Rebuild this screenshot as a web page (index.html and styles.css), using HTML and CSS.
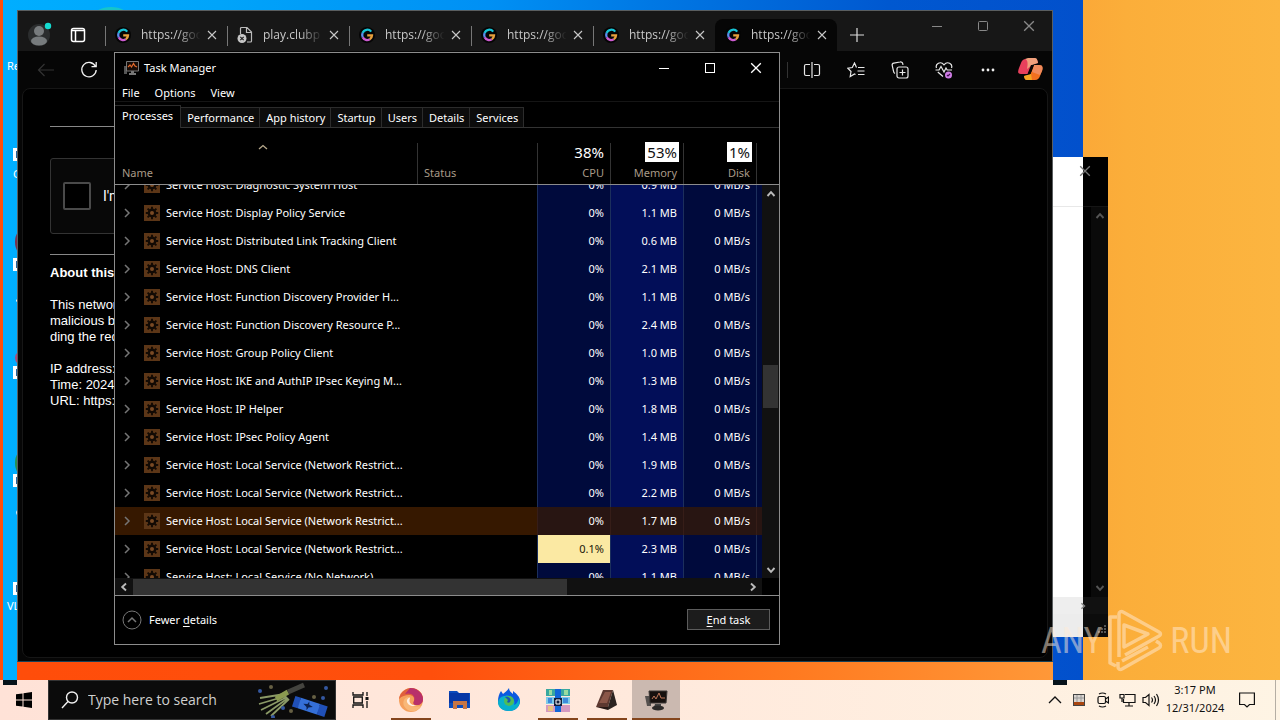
FILE: index.html
```html
<!DOCTYPE html>
<html lang="en">
<head>
<meta charset="utf-8">
<title>Task Manager</title>
<link rel="stylesheet" href="styles.css">
</head>
<body>
<svg class="sprite" aria-hidden="true">
  <defs>
    <symbol id="gear" viewBox="0 0 16 16">
      <path fill="#5c3617" d="M0 0h16v16H0z"/>
      <circle cx="8" cy="8" r="4.4" fill="#120a04"/>
      <path d="M8 1.8v12.4M1.8 8h12.4M3.6 3.6l8.8 8.8M12.4 3.6l-8.8 8.8" stroke="#120a04" stroke-width="1.9"/>
      <circle cx="8" cy="8" r="2" fill="#7a4a24"/>
    </symbol>
    <symbol id="chev" viewBox="0 0 8 10"><path d="M2 1l4 4-4 4" fill="none" stroke="#757575" stroke-width="1.5"/></symbol>
    <symbol id="glogo" viewBox="0 0 16 16">
      <circle cx="8" cy="8" r="8" fill="#050505"/>
      <path d="M12.2 4.6A5 5 0 0 0 3.6 6" fill="none" stroke="#18c4d6" stroke-width="2.3"/>
      <path d="M3.6 6a5 5 0 0 0 .2 4.4" fill="none" stroke="#5c8df0" stroke-width="2.3"/>
      <path d="M3.8 10.4a5 5 0 0 0 7 1.9" fill="none" stroke="#cc5bd0" stroke-width="2.3"/>
      <path d="M10.8 12.3A5 5 0 0 0 13 8.4H8.2" fill="none" stroke="#e8a03c" stroke-width="2.3"/>
    </symbol>
    <symbol id="x" viewBox="0 0 10 10"><path d="M1 1l8 8M9 1L1 9" fill="none" stroke="currentColor" stroke-width="1.1"/></symbol>
    <symbol id="arr" viewBox="0 0 10 10"><path d="M1.5 7L5 3.2 8.5 7" fill="none" stroke="currentColor" stroke-width="1.9"/></symbol>
    <symbol id="tm" viewBox="0 0 16 16">
      <path d="M1 6v8h3V6z" fill="#555"/><path d="M3.5 1.5h12v9.500h-12z" fill="#160b06" stroke="#777"/>
      <path d="M5 7l2-2 1.500 2L10.500 3.500 12 6l2 1" fill="none" stroke="#e0672a" stroke-width="1.200"/>
      <path d="M8 11h3v2h2v2H6v-2h2z" fill="#777"/>
    </symbol>
  </defs>
</svg>

<main class="desktop">
  <div class="wallpaper">
    <div class="glow"></div>
    <span class="shortcut s1">Recycle</span>
    <span class="shortcut s2">Google</span>
    <span class="shortcut s3">VLC</span>
    <i class="chip c1"></i><i class="chip c2"></i><i class="chip c3"></i><i class="chip c4"></i><i class="chip c5"></i>
    <i class="dot d1"></i><i class="dot d2"></i><i class="dot d3"></i><i class="dot d4"></i><i class="dot d5"></i>
  </div>

  <section class="backwin" aria-label="Background window">
    <header class="back-title"><button class="plain" aria-label="Close window"><svg width="12" height="12"><use href="#x"/></svg></button></header>
    <div class="back-body">
      <svg width="10" height="10"><use href="#arr"/></svg>
      <svg class="down" width="10" height="10"><use href="#arr"/></svg>
    </div>
    <div class="back-scroll"><svg class="right" width="8" height="8" viewBox="0 0 10 10"><use href="#arr"/></svg></div>
    <footer class="back-foot"><svg width="9" height="9" fill="#555"><path d="M6 0h2v2H6zM3 3h2v2H3zM6 3h2v2H6zM0 6h2v2H0zM3 6h2v2H3zM6 6h2v2H6z"/></svg></footer>
  </section>

  <section class="browser" aria-label="Browser">
    <header class="tabstrip">
      <button class="plain avatar" aria-label="Profile"><svg width="24" height="26" viewBox="0 0 24 26"><circle cx="11" cy="14" r="11" fill="#2b2d2e"/><circle cx="11" cy="10" r="5" fill="#777b7d"/><ellipse cx="11" cy="20" rx="8" ry="4.500" fill="#777b7d"/><circle cx="20" cy="5" r="3.200" fill="#14dbd0"/></svg></button>
      <button class="plain wsp" aria-label="Tab actions"><svg width="16" height="16" viewBox="0 0 16 16" fill="none" stroke="#fff" stroke-width="1.500"><rect x="1.500" y="1.500" width="13" height="13" rx="2"/><path d="M2 3.500h12M5.500 4v10"/></svg></button>
      <div class="tab"><svg width="16" height="16"><use href="#glogo"/></svg><span>https://goo</span><button class="plain" aria-label="Close tab"><svg width="10" height="10"><use href="#x"/></svg></button></div>
      <div class="tab"><svg width="16" height="18" viewBox="0 0 16 18"><path d="M3.500 8V2.500a1 1 0 0 1 1-1H10l4.500 4.500v9a1 1 0 0 1-1 1H10M9.500 1.500V6.500h5" fill="none" stroke="#bbb" stroke-width="1.200"/><circle cx="5" cy="12.500" r="4.500" fill="#c6c6c6"/><path d="M3.300 10.800l3.400 3.400M6.700 10.800l-3.400 3.400" stroke="#222" stroke-width="1.200"/></svg><span>play.clubp</span><button class="plain" aria-label="Close tab"><svg width="10" height="10"><use href="#x"/></svg></button></div>
      <div class="tab"><svg width="16" height="16"><use href="#glogo"/></svg><span>https://goo</span><button class="plain" aria-label="Close tab"><svg width="10" height="10"><use href="#x"/></svg></button></div>
      <div class="tab"><svg width="16" height="16"><use href="#glogo"/></svg><span>https://goo</span><button class="plain" aria-label="Close tab"><svg width="10" height="10"><use href="#x"/></svg></button></div>
      <div class="tab"><svg width="16" height="16"><use href="#glogo"/></svg><span>https://goo</span><button class="plain" aria-label="Close tab"><svg width="10" height="10"><use href="#x"/></svg></button></div>
      <div class="tab current"><svg width="16" height="16"><use href="#glogo"/></svg><span>https://goo</span><button class="plain" aria-label="Close tab"><svg width="10" height="10"><use href="#x"/></svg></button></div>
      <button class="plain newtab" aria-label="New tab"><svg width="14" height="14" viewBox="0 0 14 14"><path d="M7 0v14M0 7h14" stroke="#ddd" stroke-width="1.200"/></svg></button>
      <div class="caption">
        <button class="plain" aria-label="Minimize"><svg width="10" height="10"><path d="M0 5.500h10" stroke="#888"/></svg></button>
        <button class="plain" aria-label="Maximize"><svg width="10" height="10"><rect x=".5" y=".5" width="9" height="9" rx="1" fill="none" stroke="#888"/></svg></button>
        <button class="plain" aria-label="Close"><svg width="12" height="12"><use href="#x"/></svg></button>
      </div>
    </header>
    <nav class="toolbar">
      <button class="plain back" aria-label="Back"><svg width="18" height="14" viewBox="0 0 18 14"><path d="M17 7H1.500M7.500 1l-6 6 6 6" fill="none" stroke="#333" stroke-width="1.200"/></svg></button>
      <button class="plain" aria-label="Refresh"><svg width="18" height="18" viewBox="0 0 18 18"><path d="M15.500 5.500A7.200 7.200 0 1 0 16.200 9M16.200 1v4.700h-4.700" fill="none" stroke="#f2f2f2" stroke-width="1.300"/></svg></button>
      <span class="grow"></span>
      <span class="rule"></span>
      <button class="plain tool" aria-label="Split screen"><svg width="18" height="16" viewBox="0 0 18 16" fill="none" stroke="#e8e8e8" stroke-width="1.200"><path d="M7 2.500H3a1.500 1.500 0 0 0-1.500 1.500v8A1.500 1.500 0 0 0 3 13.500h4M11 2.500h4a1.500 1.500 0 0 1 1.500 1.500v8a1.500 1.500 0 0 1-1.500 1.500h-4M9 0v16"/></svg></button>
      <button class="plain tool" aria-label="Favorites"><svg width="18" height="16" viewBox="0 0 18 16" fill="none" stroke="#e8e8e8" stroke-width="1.200"><path d="M9.500 5.500L7.500 1 5.300 5.500.8 6.200 4 9.500l-.8 5L7.500 12l1 .6M11 5.500h6.500M10.500 9H17.500M11 12.500h6.500"/></svg></button>
      <button class="plain tool" aria-label="Collections"><svg width="18" height="18" viewBox="0 0 18 18" fill="none" stroke="#e8e8e8" stroke-width="1.200"><rect x="6" y="6" width="11" height="11" rx="2"/><path d="M11.500 8.500v6M8.500 11.500h6M4 12.500A3 3 0 0 1 2.500 10L1.200 4.500A2 2 0 0 1 2.800 2.200L9 1a2.300 2.300 0 0 1 2.800 1.800l.2 1"/></svg></button>
      <button class="plain tool" aria-label="Browser essentials"><svg width="18" height="18" viewBox="0 0 18 18" fill="none" stroke="#e8e8e8" stroke-width="1.200"><path d="M1.500 7C0 3 5.500-.5 9 3.800 12.500-.5 18 3 16.500 7M.5 9H4l2-3.500L9 11l2-4 1.200 2H17M2.800 11L8 15.500"/><circle cx="13.500" cy="14" r="3.500" fill="#cf7de6" stroke="none"/><path d="M12 14l1 1 2-2" stroke="#401050"/></svg></button>
      <button class="plain tool" aria-label="Settings"><svg width="14" height="4" fill="#eee"><circle cx="2" cy="2" r="1.400"/><circle cx="7" cy="2" r="1.400"/><circle cx="12" cy="2" r="1.400"/></svg></button>
      <button class="plain copilot" aria-label="Copilot"><svg width="25" height="23" viewBox="0 0 25 23"><path d="M8 1h9c2 0 2.500 1.500 3 4l-6 1-4 10H3c-4 0-3-3-2-6l2-5c.7-2 2-4 5-4z" fill="#e8405c"/><path d="M10 0h7c2 0 2.500 2 3 5l-6 2-5 4c1-5 1-9-2-10z" fill="#f0a07c"/><path d="M17 22H9c-2 0-2.500-1.500-3-4l6-1 4-10h5c4 0 4 3 3 6l-2 5c-.7 2-2 4-5 4z" fill="#f2701f"/><path d="M16 7h5c4 0 4 3 3 6l-2 4-8-3z" fill="#f08a5c"/><path d="M6 18l7-2 1 6H9c-2 0-2.500-1.500-3-4z" fill="#f5a623"/><path d="M13 7h3l-3.500 9H9.500z" fill="#0a0505"/></svg></button>
    </nav>
    <article class="page">
      <div class="captcha"><input type="checkbox" id="robot"><label for="robot">I'm</label></div>
      <div class="about">
        <b>About this</b>
        <p>This network<br>malicious bo<br>ding the requ</p>
        <p>IP address:<br>Time: 2024-<br>URL: https:</p>
      </div>
    </article>
  </section>

  <section class="taskmgr" aria-label="Task Manager">
    <header class="tm-title">
      <svg width="16" height="16"><use href="#tm"/></svg><h1>Task Manager</h1>
      <button class="plain" aria-label="Minimize"><svg width="10" height="10"><path d="M0 5.500h10" stroke="#fff"/></svg></button>
      <button class="plain" aria-label="Maximize"><svg width="10" height="10"><rect x=".5" y=".5" width="9" height="9" fill="none" stroke="#fff"/></svg></button>
      <button class="plain" aria-label="Close"><svg width="12" height="12"><use href="#x"/></svg></button>
    </header>
    <nav class="menu"><button class="plain">File</button><button class="plain">Options</button><button class="plain">View</button></nav>
    <nav class="tabs">
      <button class="on">Processes</button><button>Performance</button><button>App history</button><button>Startup</button><button>Users</button><button>Details</button><button>Services</button>
    </nav>
    <table class="head">
      <colgroup><col><col class="st"><col class="num"><col class="num"><col class="num"><col class="end"></colgroup>
      <thead><tr>
        <th class="name"><svg width="10" height="6" viewBox="0 0 10 6"><path d="M1 5l4-3.500L9 5" fill="none" stroke="#b7a98c" stroke-width="1.300"/></svg><span>Name</span></th>
        <th>Status</th>
        <th class="r"><em>38%</em>CPU</th>
        <th class="r"><em class="inv">53%</em>Memory</th>
        <th class="r"><em class="inv">1%</em>Disk</th>
        <th></th>
      </tr></thead>
    </table>
    <div class="pane">
      <div class="rows">
        <table class="list">
          <colgroup><col><col class="st"><col class="num"><col class="num"><col class="num"><col class="tail"></colgroup>
          <tbody>
            <tr><td><div><svg width="8" height="10"><use href="#chev"/></svg><svg width="16" height="16"><use href="#gear"/></svg>Service Host: Diagnostic System Host</div></td><td></td><td>0%</td><td>0.9 MB</td><td>0 MB/s</td><td></td></tr>
            <tr><td><div><svg width="8" height="10"><use href="#chev"/></svg><svg width="16" height="16"><use href="#gear"/></svg>Service Host: Display Policy Service</div></td><td></td><td>0%</td><td>1.1 MB</td><td>0 MB/s</td><td></td></tr>
            <tr><td><div><svg width="8" height="10"><use href="#chev"/></svg><svg width="16" height="16"><use href="#gear"/></svg>Service Host: Distributed Link Tracking Client</div></td><td></td><td>0%</td><td>0.6 MB</td><td>0 MB/s</td><td></td></tr>
            <tr><td><div><svg width="8" height="10"><use href="#chev"/></svg><svg width="16" height="16"><use href="#gear"/></svg>Service Host: DNS Client</div></td><td></td><td>0%</td><td>2.1 MB</td><td>0 MB/s</td><td></td></tr>
            <tr><td><div><svg width="8" height="10"><use href="#chev"/></svg><svg width="16" height="16"><use href="#gear"/></svg>Service Host: Function Discovery Provider H...</div></td><td></td><td>0%</td><td>1.1 MB</td><td>0 MB/s</td><td></td></tr>
            <tr><td><div><svg width="8" height="10"><use href="#chev"/></svg><svg width="16" height="16"><use href="#gear"/></svg>Service Host: Function Discovery Resource P...</div></td><td></td><td>0%</td><td>2.4 MB</td><td>0 MB/s</td><td></td></tr>
            <tr><td><div><svg width="8" height="10"><use href="#chev"/></svg><svg width="16" height="16"><use href="#gear"/></svg>Service Host: Group Policy Client</div></td><td></td><td>0%</td><td>1.0 MB</td><td>0 MB/s</td><td></td></tr>
            <tr><td><div><svg width="8" height="10"><use href="#chev"/></svg><svg width="16" height="16"><use href="#gear"/></svg>Service Host: IKE and AuthIP IPsec Keying M...</div></td><td></td><td>0%</td><td>1.3 MB</td><td>0 MB/s</td><td></td></tr>
            <tr><td><div><svg width="8" height="10"><use href="#chev"/></svg><svg width="16" height="16"><use href="#gear"/></svg>Service Host: IP Helper</div></td><td></td><td>0%</td><td>1.8 MB</td><td>0 MB/s</td><td></td></tr>
            <tr><td><div><svg width="8" height="10"><use href="#chev"/></svg><svg width="16" height="16"><use href="#gear"/></svg>Service Host: IPsec Policy Agent</div></td><td></td><td>0%</td><td>1.4 MB</td><td>0 MB/s</td><td></td></tr>
            <tr><td><div><svg width="8" height="10"><use href="#chev"/></svg><svg width="16" height="16"><use href="#gear"/></svg>Service Host: Local Service (Network Restrict...</div></td><td></td><td>0%</td><td>1.9 MB</td><td>0 MB/s</td><td></td></tr>
            <tr><td><div><svg width="8" height="10"><use href="#chev"/></svg><svg width="16" height="16"><use href="#gear"/></svg>Service Host: Local Service (Network Restrict...</div></td><td></td><td>0%</td><td>2.2 MB</td><td>0 MB/s</td><td></td></tr>
            <tr class="hover"><td><div><svg width="8" height="10"><use href="#chev"/></svg><svg width="16" height="16"><use href="#gear"/></svg>Service Host: Local Service (Network Restrict...</div></td><td></td><td>0%</td><td>1.7 MB</td><td>0 MB/s</td><td></td></tr>
            <tr><td><div><svg width="8" height="10"><use href="#chev"/></svg><svg width="16" height="16"><use href="#gear"/></svg>Service Host: Local Service (Network Restrict...</div></td><td></td><td class="busy">0.1%</td><td>2.3 MB</td><td>0 MB/s</td><td></td></tr>
            <tr><td><div><svg width="8" height="10"><use href="#chev"/></svg><svg width="16" height="16"><use href="#gear"/></svg>Service Host: Local Service (No Network)</div></td><td></td><td>0%</td><td>1.1 MB</td><td>0 MB/s</td><td></td></tr>
          </tbody>
        </table>
      </div>
      <div class="vscroll"><svg width="10" height="10"><use href="#arr"/></svg><i></i><svg class="down" width="10" height="10"><use href="#arr"/></svg></div>
    </div>
    <div class="hscroll"><svg class="left" width="10" height="10"><use href="#arr"/></svg><div><i></i></div><svg class="right" width="10" height="10"><use href="#arr"/></svg></div>
    <footer class="tm-foot">
      <button class="plain fewer"><svg width="20" height="20" viewBox="0 0 20 20" fill="none" stroke="#777"><circle cx="10" cy="10" r="9"/><path d="M6 12l4-4 4 4" stroke-width="1.500"/></svg><span>Fewer <u>d</u>etails</span></button>
      <button class="endtask"><span><u>E</u>nd task</span></button>
    </footer>
  </section>

  <div class="watermark"><span>ANY</span>
    <svg width="56" height="64" viewBox="0 0 56 64" fill="none" stroke="currentColor" stroke-width="3.500" stroke-linejoin="round"><path d="M11 48V5c0-2 2-3 4-2l36 20c2 1 2 3 0 4L17 46"/><path d="M9 8L2 8v46l6 3M10 53v5c0 2 2 3 4 2l37-21c2-1 2-4 0-5l-3-2M16 16v22l24-13zM14 52l26-14"/></svg>
    <span>RUN</span></div>
</main>

<footer class="taskbar">
  <button class="plain start" aria-label="Start"><svg width="16" height="16" viewBox="0 0 16 16"><path d="M0 2.300L6.500 1.400V7.500H0zM7.500 1.200L16 0v7.500H7.500zM0 8.500h6.500v6.100L0 13.700zM7.500 8.500H16V16l-8.500-1.200z" fill="#000"/></svg></button>
  <label class="search"><svg width="18" height="18" viewBox="0 0 18 18" fill="none" stroke="#f2f2f2" stroke-width="1.400"><circle cx="11" cy="6.500" r="5.500"/><path d="M7 10.500L1 17"/></svg>
    <input type="text" placeholder="Type here to search" aria-label="Search">
    <svg class="party" width="74" height="36" viewBox="0 0 74 36"><g stroke="#8b9a67" fill="none"><path d="M28 12L3 16M29 14L2 22M30 15L4 28M31 16L9 32M32 17L14 34" stroke-width="1.800"/><path d="M19 17L31 10" stroke="#8a9a50" stroke-width="5"/><path d="M31 10L47 3" stroke="#44443f" stroke-width="5"/></g><g transform="rotate(18 53 24)"><path d="M36 19h6v2h20v-2h8v11h-8v-2H42v2h-6z" fill="#2050b8"/><path d="M42 19h20v11H42z" fill="#3570d8"/><path d="M51 20l1 3 4 1-4 2-1 3-1-3-4-2 4-1z" fill="#0c2250"/></g><g fill="#3558a0"><circle cx="3" cy="9" r="2"/><circle cx="26" cy="26" r="2"/><circle cx="16" cy="35" r="2"/><circle cx="69" cy="6" r="2"/><circle cx="66" cy="16" r="2"/></g><g fill="#666044"><circle cx="14" cy="5" r="2"/><circle cx="57" cy="15" r="2"/><circle cx="34" cy="29" r="2"/></g></svg>
  </label>
  <button class="app view" aria-label="Task View"><svg width="18" height="16" viewBox="0 0 18 16" fill="none" stroke="#111" stroke-width="1.300"><path d="M1 0v3h10V0M1 16v-3h10v3M1.700 5h8.600v6H1.700zM15 0v4M15 9v7"/><path d="M13.500 5h3v3h-3z" fill="#111" stroke="none"/></svg></button>
  <button class="app open" aria-label="Edge"><svg width="24" height="24" viewBox="0 0 24 24"><circle cx="12" cy="12" r="12" fill="#f5a05c"/><path d="M0 11C1 4 7 0 12 0c8 0 12 6 12 11 0 4-3 6-6 6-4 0-4-2-3-4 1-4-2-6-5-6-4 0-7 1-10 4z" fill="#e0603c"/><path d="M11 0c8 0 13 6 13 11 0 4-3 6-6 6-4 0-4-2-3-4 2-5-3-9-9-7z" fill="#b8306a"/><path d="M10 9c-4 6 2 11 12 9-4 7-13 7-17 0-2-5 1-9 5-9z" fill="#f9b878"/><path d="M11 10c-2 5 2 8 7 7-5 3-11-1-10-5 1-2 3-3 3-2z" fill="#fff0e4"/></svg></button>
  <button class="app" aria-label="File Explorer"><svg width="22" height="20" viewBox="0 0 22 20"><path d="M0 1h8l2 2h11v15H0z" fill="#0b4bbd"/><path d="M0 3h20v10H0z" fill="#0637a6"/><path d="M4 11h14v8h-4v-4H8v4H4z" fill="#c77545"/></svg></button>
  <button class="app" aria-label="Firefox"><svg width="24" height="24" viewBox="0 0 24 24"><path d="M1 13C1 9 2 6 4 3l2 3c2-2 4-3 6-6 0 3 2 4 4 6V3c4 3 7 6 7 10 0 6-5 10-11 10S1 19 1 13z" fill="#0a5ae0"/><path d="M1 14c1-4 4-6 7-6 6-2 11 4 9 9 3-1 4-4 5-7 3 8-4 13-10 13S1 20 1 14z" fill="#08b0cc"/><circle cx="12" cy="13" r="5" fill="#4dbd58"/><path d="M8 9c4-1 7 2 5 5-1 1-2 1-3 0l1-2z" fill="#1657b4"/></svg></button>
  <button class="app open" aria-label="WinRAR"><svg width="24" height="23" viewBox="0 0 24 23"><path d="M0 0h24v7H0z" fill="#38a8a0"/><path d="M0 8h24v7H0z" fill="#80cbe8"/><path d="M0 16h24v7H0z" fill="#d59ac0"/><path d="M3 1h3v5H3zM18 1h4v5h-4z" fill="#99dba0"/><path d="M2 9h4v5H2zM17 9h5v5h-5z" fill="#3d8bdc"/><path d="M2 17h5v5H2z" fill="#e8c37f"/><path d="M9 0h6v23H9z" fill="#1266d8"/><path d="M8 9h8v8H8z" fill="#131d38"/><path d="M10 11h4v4h-4z" stroke="#fff" fill="none"/></svg></button>
  <button class="app open" aria-label="Editor"><svg width="22" height="22" viewBox="0 0 22 22"><path d="M7 1h10l-5 17H0z" fill="#5c3830"/><path d="M17 1l4 15-9 5v-3z" fill="#2c2421"/><path d="M9 3h6l-4 11H3z" fill="#8a5648"/><path d="M0 18h12v3z" fill="#271916"/></svg></button>
  <button class="app open active" aria-label="Task Manager"><svg width="23" height="23" viewBox="0 0 23 23"><path d="M0 7h6v10H2z" fill="#55514f"/><path d="M4 2h18l-1 12H5z" fill="#17110f" stroke="#3c3836"/><path d="M7 10l2-3 2 3 3-6 2 5h4" fill="none" stroke="#c1795b"/><path d="M10 15h6v3H9z" fill="#444"/><ellipse cx="13" cy="19" rx="6" ry="2.500" fill="#2c2a29"/></svg></button>
  <span class="grow"></span>
  <div class="tray">
    <svg width="14" height="8" viewBox="0 0 14 8"><path d="M1 7l6-6 6 6" fill="none" stroke="#111" stroke-width="1.300"/></svg>
    <svg width="12" height="12" viewBox="0 0 12 12"><path d="M0 0h12v12H0z" fill="#444"/><path d="M1 1h10v7H1z" fill="#d9d4d0"/><path d="M1 4h10M4 1v7M8 1v7" stroke="#999"/><path d="M1 8h10v3H1z" fill="#a9450f"/></svg>
    <svg width="12" height="16" viewBox="0 0 12 16" fill="none" stroke="#111" stroke-width="1.200"><rect x="1" y="4.500" width="7.500" height="7" rx="1.500"/><path d="M8.500 7l3-2v6l-3-2M2 2q3.500-2 7 0M2 14q3.500 2 7 0"/></svg>
    <svg width="17" height="14" viewBox="0 0 17 14" fill="none" stroke="#111" stroke-width="1.200"><path d="M6 1.500h10v8H4.500V6M10 9.500V13M6 13h8M1 1.500h4v3.500H1zM3 5v4"/></svg>
    <svg width="18" height="14" viewBox="0 0 18 14" fill="none" stroke="#111" stroke-width="1.200"><path d="M1 4.500h2.500L7 1.500v11L3.500 9.500H1zM9.500 4.500q2 2.500 0 5M12 3q3 4 0 8M14.500 1q4 6 0 12"/></svg>
  </div>
  <time class="clock">3:17 PM<br>12/31/2024</time>
  <button class="plain notes" aria-label="Notifications"><svg width="16" height="16" viewBox="0 0 16 16"><path d="M.6 1h14.800v11.500H10.500L8 15l-2.500-2.500H.6z" fill="none" stroke="#111" stroke-width="1.200"/></svg></button>
  <span class="peek"></span>
</footer>
</body>
</html>
```
FILE: styles.css
```css
* { box-sizing: border-box; }
body { margin: 0; height: 100vh; display: flex; flex-direction: column; overflow: hidden; color: #fff; font: 11px/16px "Noto Sans", "Open Sans", sans-serif; }
svg { flex: none; display: block; }
button { font: inherit; color: inherit; }
.sprite { position: absolute; width: 0; height: 0; }
.plain { background: none; border: 0; padding: 0; display: flex; align-items: center; justify-content: center; }
.grow { flex: 1; }
.down { transform: rotate(180deg); }
.left { transform: rotate(-90deg); }
.right { transform: rotate(90deg); }

/* Desktop */
.desktop { flex: 1; position: relative; overflow: hidden; background: linear-gradient(90deg, #ff4f0a 0, #ff500c 30%, #ff8a2a 65%, #fbae3a 88%, #fcb540 100%); }
.wallpaper { position: absolute; inset: 0 197px 0 3px; overflow: hidden; background: linear-gradient(90deg, #00aeff 0, #00a4fa 20%, #0090f4 45%, #0078e4 60%, #0058d0 82%, #0250cc 100%); }
.wallpaper::after { content: ""; position: absolute; inset: auto 30px 0 14px; height: 18px; background: linear-gradient(90deg, #ff4d0a 0, #ff4f0c 40%, #ff7a20 75%, #ff9838 100%); }
.glow { position: absolute; left: 90px; top: 7px; width: 36px; height: 20px; border-radius: 50%; background: #16c5ca; }
.shortcut { position: absolute; left: 4px; }
.s1 { top: 58px; } .s2 { top: 166px; left: 10px; } .s3 { top: 598px; }
.chip { position: absolute; left: 10px; width: 12px; height: 13px; background: #26649c; border: 3px solid #fff; border-right: 0; }
.c1 { top: 148px; } .c2 { top: 258px; } .c3 { top: 366px; } .c4 { top: 474px; } .c5 { top: 582px; }
.dot { position: absolute; left: 12px; width: 20px; height: 28px; border-radius: 50%; }
.d1 { top: 228px; background: #7a2f4c; } .d2 { top: 349px; height: 18px; background: #b04878; } .d3 { top: 449px; background: #278f50; }
.d4 { top: 299px; left: 13px; width: 4px; height: 3px; background: #fff; } .d5 { top: 510px; left: 13px; width: 4px; height: 5px; background: #d9f0ff; }

.backwin { position: absolute; inset: 157px 172px 43px auto; width: 55px; display: flex; flex-direction: column; background: linear-gradient(90deg, #fff 30px, #000 30px); }
.back-title { height: 50px; padding: 8px 17px 0; display: flex; justify-content: flex-end; align-items: flex-start; color: #777; border-bottom: 1px solid #e8e8e8; border-image: linear-gradient(90deg, #e8e8e8 30px, #151515 30px) 1; }
.back-body { flex: 1; margin-left: 38px; background: #0a0a0a; color: #555; display: flex; flex-direction: column; justify-content: space-between; align-items: center; padding: 4px 0; }
.back-scroll { height: 17px; display: flex; align-items: center; justify-content: flex-end; padding-right: 21px; color: #888; background: linear-gradient(90deg, #eee 30px, #111 30px); }
.back-foot { height: 23px; padding: 11px 1px 0; display: flex; justify-content: flex-end; background: linear-gradient(90deg, #ececec 30px, #0c0c0c 30px); }

/* Browser */
.browser { position: absolute; inset: 10px 227px 18px 17px; display: flex; flex-direction: column; background: #060606; border: 1px solid #5a5e60; border-bottom: 1px solid #164057; }
.tabstrip { height: 40px; display: flex; background: #171717; color: #c8c8c8; }
.avatar { width: 44px; padding-top: 6px; }
.wsp { width: 32px; padding-top: 8px; }
.tab { width: 122px; margin-top: 8px; padding: 0 10px; display: flex; align-items: center; position: relative; }
.wsp + .tab { margin-left: 11px; }
.tab::before { content: ""; position: absolute; left: 0; top: 7px; height: 20px; width: 1px; background: #777; }
.tab span { flex: 1; width: 0; margin: 0 4px 0 10px; overflow: hidden; white-space: nowrap; font: 12px/16px "Open Sans", sans-serif; mask-image: linear-gradient(90deg, #000 60%, transparent 96%); }
.tab.current { background: #060606; border-radius: 8px 8px 0 0; }
.tab.current::before { display: none; }
.newtab { width: 40px; padding-top: 7px; }
.caption { margin-left: auto; display: flex; align-items: flex-start; color: #888; }
.caption button { width: 46px; height: 30px; }
.toolbar { height: 37px; display: flex; align-items: center; }
.toolbar .back { width: 40px; margin: 0 14px 0 8px; }
.rule { width: 1px; height: 16px; margin-right: 2px; background: #333; }
.tool { width: 44px; }
.copilot { width: 40px; margin-right: 2px; }
.page { flex: 1; margin: 0 4px 3px 4px; padding: 69px 32px 0 27px; background: #000; border: 1px solid #161616; border-radius: 8px; font: 13px/16px "Liberation Sans", Arial, sans-serif; white-space: nowrap; }
.captcha { display: flex; align-items: center; gap: 12px; width: 304px; height: 76px; padding-left: 12px; margin-bottom: 20px; background: #080808; border: 1px solid #333; border-radius: 3px; font: 14px/20px Roboto, sans-serif; position: relative; }
.captcha::before { content: ""; position: absolute; top: -33px; left: -1px; width: 304px; border-top: 1px solid #888; }
.captcha input { appearance: none; width: 28px; height: 28px; margin: 0; border: 2px solid #4a4a4a; border-radius: 2px; background: #000; }
.about { width: 304px; border-top: 1px solid #888; padding-top: 10px; }
.about p { margin: 16px 0; }

/* Task Manager */
.taskmgr { position: absolute; inset: 52px 500px 35px 114px; display: flex; flex-direction: column; background: #000; border: 1px solid #8c8c8c; }
.tm-title { height: 30px; display: flex; align-items: center; padding-left: 8px; }
.tm-title h1 { flex: 1; margin: 0 0 0 5px; font-size: 11px; font-weight: 400; }
.tm-title button { width: 46px; height: 30px; }
.menu { height: 19px; padding: 1px 7px 0; display: flex; gap: 15px; border-bottom: 1px solid #151515; }
.tabs { height: 26px; display: flex; align-items: flex-end; padding-top: 3px; border-bottom: 1px solid #333; }
.tabs button { height: 20px; flex: none; padding: 0 5px 0 6px; background: #0c0c0c; border: 1px solid #2c2c2c; border-width: 1px 1px 0 0; line-height: 16px; }
.tabs .on { height: 23px; padding: 0 7px 3px; background: #000; margin-bottom: -1px; }
table { width: 100%; table-layout: fixed; border-collapse: separate; border-spacing: 0; }
.st { width: 120px; } .num { width: 73px; } .end { width: 22px; } .tail { width: 5px; }
.head { border-bottom: 1px solid #8c8c8c; }
.head tr { height: 56px; }
th { padding: 0 6px 3px; text-align: left; vertical-align: bottom; font-weight: 400; color: #a89a88; background: linear-gradient(#333, #333) right bottom / 1px 41px no-repeat; }
th:last-child { background: none; }
th.name { padding: 0 15px 3px 7px; }
th.name svg { margin: 0 auto 15px; }
th span { display: block; }
th.r { padding-right: 7px; text-align: right; }
th em { display: block; width: max-content; margin: 0 -2px 3px auto; padding: 0 2px; font: 15px/20px "Noto Sans", sans-serif; color: #fff; }
th em.inv { background: #fff; color: #111; }
.pane { flex: 1; min-height: 0; display: flex; }
.rows { flex: 1; overflow: hidden; }
.list { margin-top: -14px; }
.list tr { height: 28px; }
td { padding: 0 6px; text-align: right; white-space: nowrap; }
td:first-child { padding: 0 0 0 8px; }
td div { display: flex; align-items: center; }
td div svg + svg { margin: 0 6px 0 13px; }
td:nth-child(n+2):nth-child(-n+5) { border-right: 1px solid #1c2f5c; }
td:nth-child(n+3) { background: #000a3c; }
td:nth-child(4) { background: #020e58; }
.list .hover td { background: #361800; border-color: #361d18; }
.list .hover td:nth-child(n+3) { background: #281512; }
.list .busy { background: #fbe9a3; color: #1a1608; }
.vscroll { width: 17px; padding: 4px 0 3px; display: flex; flex-direction: column; align-items: center; background: #111; color: #bbb; }
.vscroll i { width: 15px; height: 43px; margin: 166px 0 auto; background: #333; }
.hscroll { height: 17px; display: flex; align-items: center; margin-right: 17px; padding: 0 4px; gap: 4px; background: #111; color: #bbb; }
.hscroll div { flex: 1; height: 16px; }
.hscroll i { display: block; width: 71%; height: 16px; background: #333; }
.tm-foot { height: 49px; display: flex; align-items: center; justify-content: space-between; padding: 0 9px 1px 7px; border-top: 1px solid #8c8c8c; }
.fewer { gap: 7px; }
u { text-underline-offset: 2px; }
.endtask { width: 83px; height: 21px; padding: 0; background: #1c1c1c; border: 1px solid #5c5c5c; line-height: 19px; }

.watermark { position: absolute; right: 48px; bottom: 7px; display: flex; align-items: center; gap: 6px; color: rgba(255, 235, 215, .5); font: 36px/64px "Roboto Condensed", "Liberation Sans Narrow", sans-serif; }

/* Taskbar */
.taskbar { height: 40px; flex: none; display: flex; background: linear-gradient(90deg, #ffe2d7, #ffe9dc 50%, #fef4e4); color: #111; position: relative; }
.taskbar::before, .taskbar::after { content: ""; position: absolute; top: 0; left: 3px; width: 14px; height: 5px; background: #06121a; }
.taskbar::after { left: auto; right: 213px; }
.start { width: 48px; }
.search { width: 288px; display: flex; align-items: center; padding: 0 4px 0 12px; background: #0b0b0b; border: 1px solid #333; }
.search input { flex: 1; min-width: 0; margin-left: 9px; padding: 0; border: 0; background: none; font: 14px/20px "Open Sans", sans-serif; color: #ddd; }
.search input::placeholder { color: #d0d0d0; opacity: 1; }
.app { width: 48px; margin-left: 1px; padding: 0; display: flex; align-items: center; justify-content: center; background: none; border: 0; position: relative; }
.view { width: 50px; margin: 0; }
.open::after { content: ""; position: absolute; bottom: 0; left: 4px; right: 4px; height: 2px; background: #84451c; }
.active { background: #cbb9b0; }
.active::after { left: 0; right: 0; }
.tray { display: grid; grid-template-columns: repeat(5, 24px); align-items: center; justify-items: center; }
.clock { width: 64px; text-align: center; line-height: 18px; padding-top: 1px; white-space: nowrap; }
.notes { width: 40px; margin-right: 8px; }
.peek { width: 5px; border-left: 1px solid #b5aea4; }
```
